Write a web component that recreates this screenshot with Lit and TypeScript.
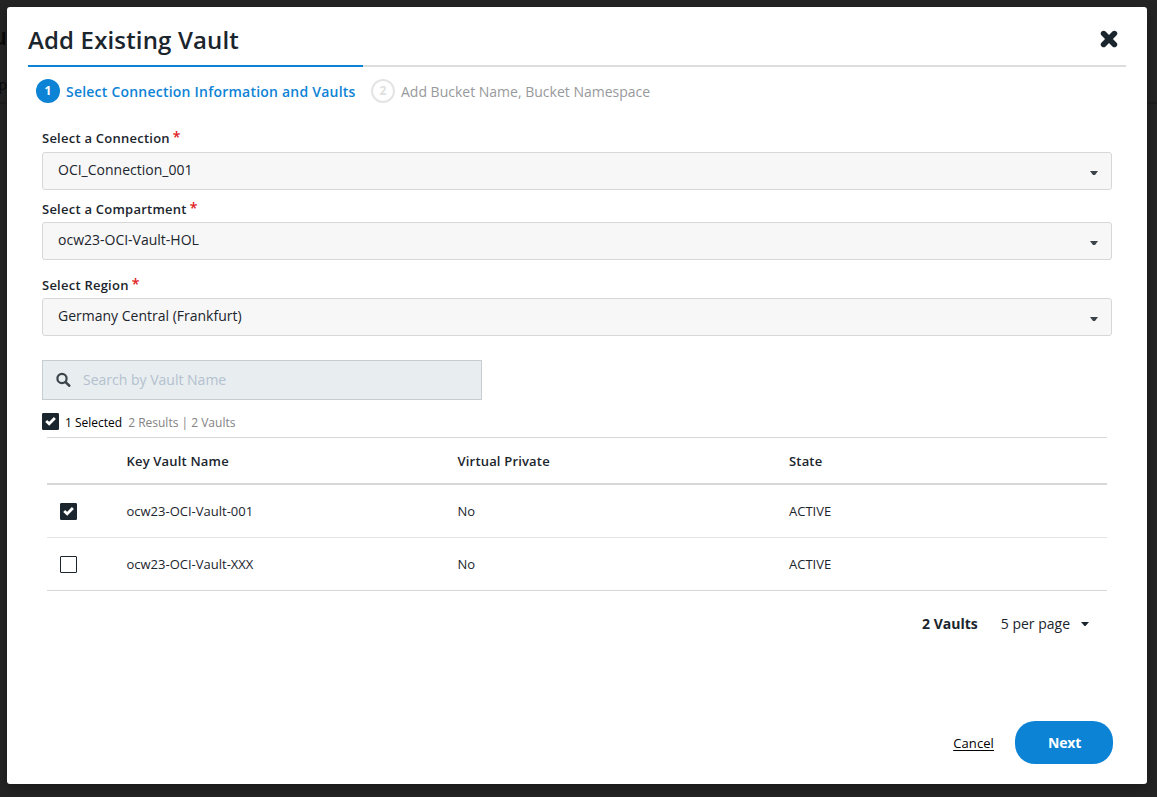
import { LitElement, html, css } from "lit";
import { customElement, property, state } from "lit/decorators.js";
import { classMap } from "lit/directives/class-map.js";

@customElement("vault-check")
class VaultCheck extends LitElement {
  @property({ type: Boolean }) checked = false;
  static styles = css`
    :host { display: block; width: 17px; height: 17px; }
    .box { box-sizing: border-box; width: 17px; height: 17px; border: 1px solid #1b252d; border-radius: 1px; background: #fff; }
    .on { background: #1b252d; }
    svg { display: block; width: 15px; height: 15px; }
  `;
  render() {
    return html`<div class=${classMap({ box: true, on: this.checked })}>
      ${this.checked ? html`<svg viewBox="0 0 15 15"><path d="M3.2 6.9 6.2 9.7 11.9 4.1" fill="none" stroke="#fff" stroke-width="2.8"/></svg>` : ""}
    </div>`;
  }
}

@customElement("vault-select")
class VaultSelect extends LitElement {
  @property() label = "";
  @property() value = "";
  static styles = css`
    :host { display: block; font-family: "Open Sans", sans-serif; color: #1b252d; }
    .label { display: flex; height: 23px; line-height: 18px; font-size: 13px; font-weight: 600; letter-spacing: 0.24px; white-space: nowrap; }
    :host(.tight) .label { height: 22px; }
    .star { color: #e02020; font-size: 14px; line-height: 15px; margin-left: 3px; }
    .box { box-sizing: border-box; height: 38px; border: 1px solid #d6d7d8; border-radius: 3px; background: #f7f7f7; display: flex; justify-content: space-between; padding: 0 13px 0 15px; font-size: 14px; line-height: 34px; }
    .caret { width: 8px; height: 5px; margin-top: 18px; }
  `;
  render() {
    return html`
      <div class="label"><span>${this.label}</span><span class="star">*</span></div>
      <div class="box"><span>${this.value}</span>
        <svg class="caret" viewBox="0 0 8 5"><path d="M0 0H8L5 4H3Z" fill="#3b444b"/></svg>
      </div>`;
  }
}

@customElement("app-root")
class AppRoot extends LitElement {
  @state() rows = [
    { name: "ocw23-OCI-Vault-001", priv: "No", state: "ACTIVE", on: true },
    { name: "ocw23-OCI-Vault-XXX", priv: "No", state: "ACTIVE", on: false },
  ];
  static styles = css`
    :host { display: block; box-sizing: border-box; width: 1157px; height: 797px; padding: 7px 10px 13px 7px; background: #242424; position: relative; overflow: hidden; font-family: "Open Sans", sans-serif; color: #1b252d; }
    * { box-sizing: border-box; }
    .behind { position: absolute; right: 1150px; color: #080808; white-space: nowrap; }
    .behind-title { top: 20px; font-size: 24px; font-weight: 600; line-height: 32px; }
    .behind-text { top: 75px; font-size: 14px; line-height: 19px; }
    .rule { position: absolute; left: 0; right: 0; top: 102px; height: 2px; background: #1e1e1e; }
    .modal { position: relative; height: 777px; background: #fff; border-radius: 3px; box-shadow: 0 4px 12px rgba(0,0,0,.3); display: flex; flex-direction: column; }
    .head { height: 58px; margin: 0 21px; display: flex; justify-content: space-between; }
    h1 { margin: 16px 0 0; font-size: 24px; line-height: 34px; font-weight: 600; letter-spacing: 0.15px; white-space: nowrap; }
    .close { width: 18px; height: 18px; margin: 23px 8px 0 0; }
    .track { height: 2px; margin: 0 21px; background: #dcdddd; }
    .fill { width: 335px; height: 2px; background: #0d83d6; }
    .steps { height: 24px; margin: 12px 29px 0; display: flex; white-space: nowrap; font-size: 14px; line-height: 25px; }
    .num { width: 24px; height: 24px; border-radius: 50%; margin-right: 6px; text-align: center; font-size: 12px; line-height: 23px; font-weight: 700; background: #0d83d6; color: #fff; }
    .step1 { width: 305px; color: #0d83d6; font-weight: 600; letter-spacing: 0.22px; }
    .num.next { background: #fff; border: 2px solid #e4e4e4; color: #e0e0e0; line-height: 19px; }
    .step2 { color: #97999c; }
    .form { padding: 26px 35px 0; display: flex; flex-direction: column; }
    .f2 { margin-top: 10px; }
    .f3 { margin-top: 16px; }
    .search { margin-top: 24px; width: 440px; height: 40px; border: 1px solid #c5cdd1; background: #e8edf0; display: flex; align-items: center; padding: 0 0 2px 13px; font-size: 14px; color: #b3c1cf; }
    .search svg { width: 15px; height: 15px; margin-right: 12px; }
    .summary { height: 17px; margin-top: 13px; display: flex; line-height: 19px; font-size: 12px; color: #000; white-space: nowrap; }
    .sel { margin-left: 6px; }
    .results { margin-left: 6px; color: #838383; }
    .table { margin: 7px 5px 0; border-top: 1px solid #d6d7d8; font-size: 13px; }
    .row { display: grid; grid-template-columns: 79.5px 331px 331.5px 1fr; height: 53px; align-items: center; border-bottom: 1px solid #e3e4e5; }
    .row:last-child { border-bottom-color: #d6d7d8; }
    .row.th { height: 47px; border-bottom: 2px solid #d6d7d8; font-weight: 600; letter-spacing: 0.18px; }
    .row vault-check { margin-left: 13px; }
    .pager { margin: 23px 23px 0 0; height: 20px; display: flex; justify-content: flex-end; align-items: center; font-size: 14px; line-height: 20px; white-space: nowrap; }
    .pager b { font-weight: 700; margin-right: 23px; }
    .pager svg { width: 8px; height: 5px; margin-left: 11px; }
    .actions { margin: auto 34px 20px 0; display: flex; justify-content: flex-end; align-items: center; }
    .cancel { font-size: 13px; color: #000; letter-spacing: 0.1px; text-decoration: underline; text-underline-offset: 2px; margin-right: 21px; }
    .next-btn { width: 98px; height: 43px; border: 0; border-radius: 20px; background: #0d83d6; color: #fff; font: 700 14px/43px "Open Sans", sans-serif; letter-spacing: -0.2px; padding: 0 0 0 1px; text-align: center; }
  `;
  render() {
    return html`
      <div class="rule"></div>
      <div class="behind behind-title">u</div>
      <div class="behind behind-text">p</div>
      <div class="modal" role="dialog">
        <div class="head">
          <h1>Add Existing Vault</h1>
          <svg class="close" viewBox="0 0 18 18"><path d="M3.6 3.6 14.4 14.4M14.4 3.6 3.6 14.4" stroke="#1b252d" stroke-width="5.6" stroke-linecap="round"/></svg>
        </div>
        <div class="track"><div class="fill"></div></div>
        <div class="steps">
          <span class="num">1</span><span class="step1">Select Connection Information and Vaults</span>
          <span class="num next">2</span><span class="step2">Add Bucket Name, Bucket Namespace</span>
        </div>
        <div class="form">
          <vault-select label="Select a Connection" value="OCI_Connection_001"></vault-select>
          <vault-select class="f2 tight" label="Select a Compartment" value="ocw23-OCI-Vault-HOL"></vault-select>
          <vault-select class="f3 tight" label="Select Region" value="Germany Central (Frankfurt)"></vault-select>
          <div class="search">
            <svg viewBox="0 0 15 15"><circle cx="6" cy="6.5" r="4.6" fill="none" stroke="#3c454c" stroke-width="2.2"/><path d="M9.6 10.1 13.2 13.7" stroke="#3c454c" stroke-width="2.6" stroke-linecap="round"/></svg>
            <span>Search by Vault Name</span>
          </div>
          <div class="summary"><vault-check checked></vault-check><span class="sel">1 Selected</span><span class="results">2 Results | 2 Vaults</span></div>
          <div class="table">
            <div class="row th"><span></span><span>Key Vault Name</span><span>Virtual Private</span><span>State</span></div>
            ${this.rows.map((r) => html`<div class="row"><vault-check ?checked=${r.on}></vault-check><span>${r.name}</span><span>${r.priv}</span><span>${r.state}</span></div>`)}
          </div>
          <div class="pager"><b>2 Vaults</b><span>5 per page</span><svg viewBox="0 0 8 5"><path d="M0 0H8L4.5 4H3.5Z" fill="#1b252d"/></svg></div>
        </div>
        <div class="actions"><span class="cancel">Cancel</span><button class="next-btn">Next</button></div>
      </div>`;
  }
}
